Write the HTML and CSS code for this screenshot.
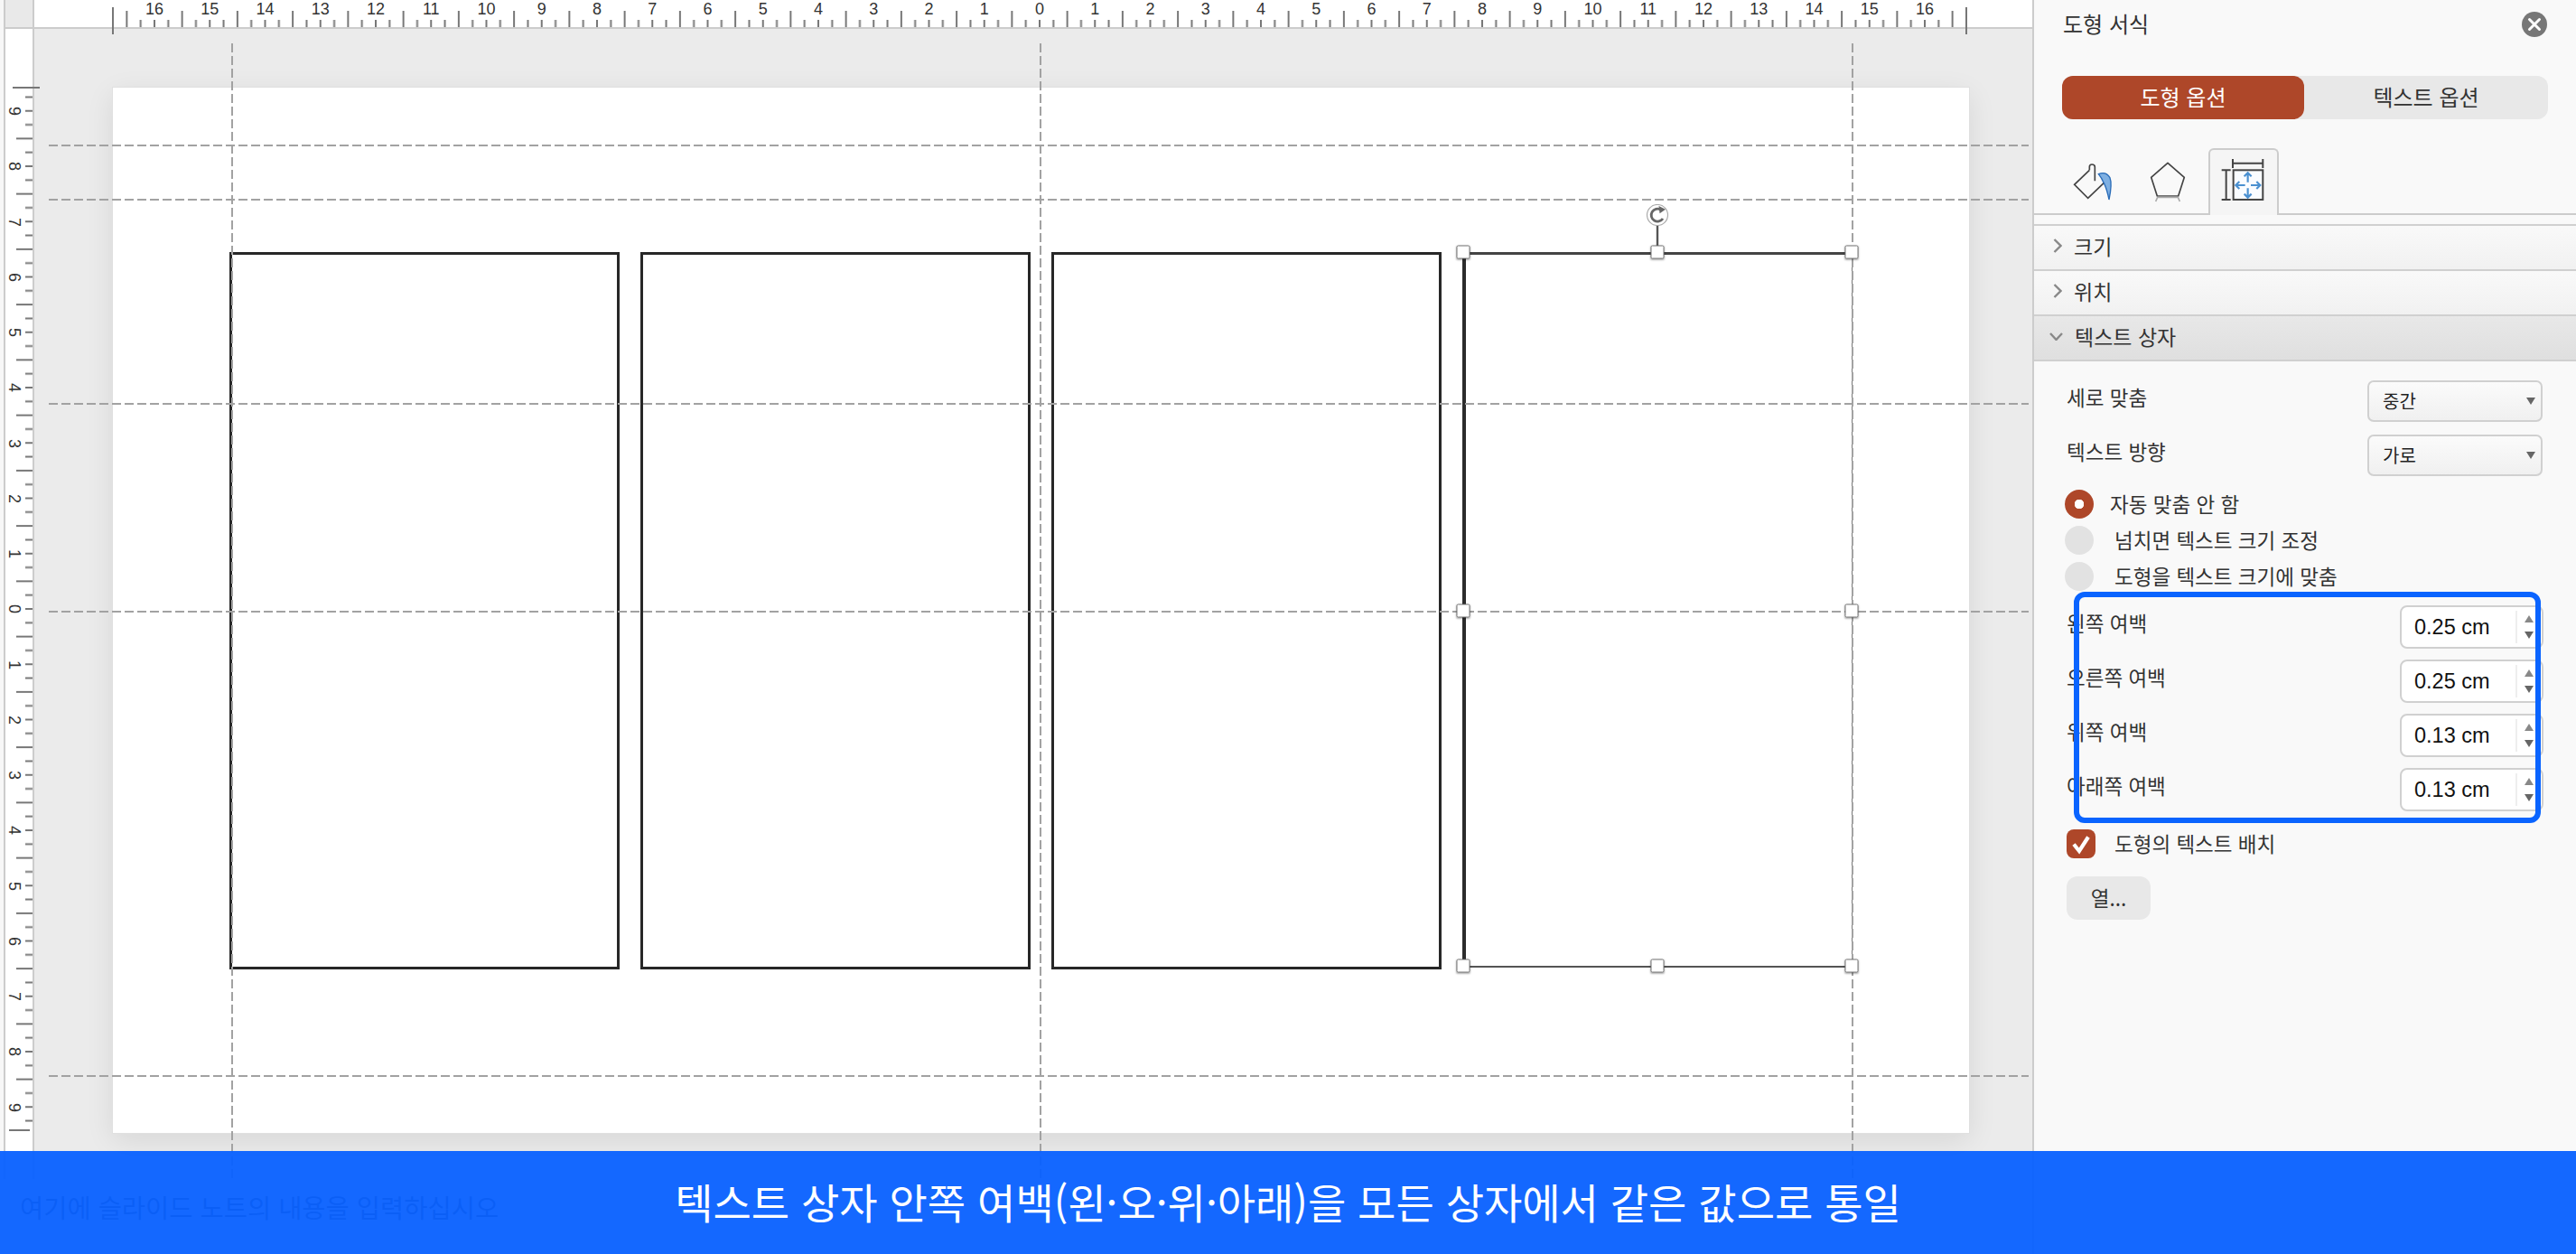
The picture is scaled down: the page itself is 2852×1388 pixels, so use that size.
FILE: index.html
```html
<!DOCTYPE html>
<html lang="ko">
<head>
<meta charset="utf-8">
<title>도형 서식</title>
<link rel="stylesheet" href="styles.css">
</head>
<body>
<div class="app">
  <main class="workspace">
    <div class="corner"></div>
    <div class="hruler">
      <span>16</span><span>15</span><span>14</span><span>13</span><span>12</span><span>11</span><span>10</span><span>9</span><span>8</span><span>7</span><span>6</span><span>5</span><span>4</span><span>3</span><span>2</span><span>1</span><span>0</span><span>1</span><span>2</span><span>3</span><span>4</span><span>5</span><span>6</span><span>7</span><span>8</span><span>9</span><span>10</span><span>11</span><span>12</span><span>13</span><span>14</span><span>15</span><span>16</span>
    </div>
    <div class="vruler">
      <span>9</span><span>8</span><span>7</span><span>6</span><span>5</span><span>4</span><span>3</span><span>2</span><span>1</span><span>0</span><span>1</span><span>2</span><span>3</span><span>4</span><span>5</span><span>6</span><span>7</span><span>8</span><span>9</span>
    </div>
    <div class="canvas">
      <div class="slide">
        <div class="box"></div>
        <div class="box"></div>
        <div class="box"></div>
        <div class="box box-selected">
          <svg class="rotate" viewBox="-13 -12 26 47" width="26" height="47">
            <line x1="0" y1="11" x2="0" y2="34" stroke="#555" stroke-width="2.4"/>
            <circle cx="0" cy="0" r="11.5" fill="#fff" stroke="#aaa" stroke-width="1.2"/>
            <path d="M6 4A7 7 0 1 1 3.6-6" fill="none" stroke="#666" stroke-width="2.8"/>
            <path d="M1.5-10 9-6.2 2.5-1.8Z" fill="#666"/>
          </svg>
          <i class="handle h-tl"></i><i class="handle h-tc"></i><i class="handle h-tr"></i>
          <i class="handle h-ml"></i><i class="handle h-mr"></i>
          <i class="handle h-bl"></i><i class="handle h-bc"></i><i class="handle h-br"></i>
        </div>
      </div>
      <i class="guide-v gv1"></i><i class="guide-v gv2"></i><i class="guide-v gv3"></i>
      <i class="guide-h gh1"></i><i class="guide-h gh2"></i><i class="guide-h gh3"></i><i class="guide-h gh4"></i><i class="guide-h gh5"></i>
    </div>
    <div class="notes">여기에 슬라이드 노트의 내용을 입력하십시오</div>
    <svg class="ticks-h" width="2250" height="40" aria-hidden="true">
      <defs>
        <pattern id="tick-h" patternUnits="userSpaceOnUse" x="1150" y="0" width="61.25" height="40">
          <rect x="0" y="22" width="2" height="8" fill="#777"/>
          <rect x="15.31" y="22" width="2" height="8" fill="#777"/>
          <rect x="30.62" y="12" width="2" height="18" fill="#777"/>
          <rect x="45.94" y="22" width="2" height="8" fill="#777"/>
        </pattern>
      </defs>
      <rect x="130" y="0" width="2040" height="31" fill="url(#tick-h)"/>
      <rect x="124" y="8" width="2" height="30" fill="#777"/>
      <rect x="2176" y="8" width="2" height="30" fill="#777"/>
    </svg>
    <svg class="ticks-v" width="48" height="1300" aria-hidden="true">
      <defs>
        <pattern id="tick-v" patternUnits="userSpaceOnUse" x="0" y="673" width="40" height="61.25">
          <rect x="28" y="0" width="8" height="2" fill="#777"/>
          <rect x="28" y="15.31" width="8" height="2" fill="#777"/>
          <rect x="18" y="30.62" width="18" height="2" fill="#777"/>
          <rect x="28" y="45.94" width="8" height="2" fill="#777"/>
        </pattern>
      </defs>
      <rect x="0" y="102" width="36" height="1144" fill="url(#tick-v)"/>
      <rect x="14" y="96" width="30" height="2" fill="#777"/>
      <rect x="10" y="1250" width="23" height="2" fill="#777"/>
    </svg>
  </main>

  <aside class="panel">
    <header class="panel-head">
      <h1>도형 서식</h1>
      <button class="close" type="button" aria-label="닫기">
        <svg viewBox="0 0 28 28" width="28" height="28"><path d="M8.5 8.5 19.5 19.5M19.5 8.5 8.5 19.5" stroke="#fff" stroke-width="3" stroke-linecap="round"/></svg>
      </button>
    </header>
    <div class="segment">
      <div class="seg seg-on">도형 옵션</div>
      <div class="seg">텍스트 옵션</div>
    </div>
    <div class="icon-tabs">
      <svg class="ico-fill" viewBox="45 125 135 125" width="45" height="41.67">
        <path d="M100 147 50 195 95 240 160 178" fill="none" stroke="#444" stroke-width="5" stroke-linejoin="miter"/>
        <path d="M100 147V136Q100 128 108 128 118 128 118 136V183" fill="none" stroke="#444" stroke-width="5"/>
        <path d="M130 160Q155 150 168 172 176 192 165 245 158 210 148 190 140 172 130 160Z" fill="#7fb0e2" stroke="#2a6cb8" stroke-width="4"/>
      </svg>
      <svg class="ico-shape" viewBox="300 118 120 135" width="40" height="45">
        <path d="M360 122 415 170 395 232H325L305 170Z" fill="none" stroke="#444" stroke-width="5" stroke-linejoin="round"/>
        <path d="M325 236H395M326 236 320 250M394 236 400 250" fill="none" stroke="#aaa" stroke-width="5"/>
      </svg>
      <div class="tab-on">
        <svg viewBox="535 112 148 142" width="49.3" height="47.3">
          <rect x="579" y="152" width="98" height="98" fill="#f9fcff" stroke="#444" stroke-width="6"/>
          <path d="M577 115V145M677 115V145M577 129H677M540 152H570M540 250H570M555 152V250" fill="none" stroke="#444" stroke-width="6"/>
          <path d="M627 162V192M615 173 627 161 639 173M627 212V242M615 231 627 243 639 231M588 202H618M599 190 587 202 599 214M637 202H667M656 190 668 202 656 214" fill="none" stroke="#4a90d0" stroke-width="6.5"/>
        </svg>
      </div>
    </div>
    <div class="section-head first">
      <svg class="chev-r" viewBox="0 0 10 16" width="10" height="16"><path d="M1.5 1 8.5 8 1.5 15" fill="none" stroke="#888" stroke-width="2.4"/></svg>
      <span>크기</span>
    </div>
    <div class="section-head">
      <svg class="chev-r" viewBox="0 0 10 16" width="10" height="16"><path d="M1.5 1 8.5 8 1.5 15" fill="none" stroke="#888" stroke-width="2.4"/></svg>
      <span>위치</span>
    </div>
    <div class="section-head open">
      <svg class="chev-d" viewBox="0 0 15 9" width="15" height="9"><path d="M1 1 7.5 8 14 1" fill="none" stroke="#888" stroke-width="2.4"/></svg>
      <span>텍스트 상자</span>
    </div>
    <div class="form">
      <div class="row">
        <label>세로 맞춤</label>
        <div class="select">중간<i class="tri-down"></i></div>
      </div>
      <div class="row row-b">
        <label>텍스트 방향</label>
        <div class="select">가로<i class="tri-down"></i></div>
      </div>
      <div class="radios">
        <div class="radio-row first"><i class="radio on"></i><span>자동 맞춤 안 함</span></div>
        <div class="radio-row"><i class="radio"></i><span>넘치면 텍스트 크기 조정</span></div>
        <div class="radio-row"><i class="radio"></i><span>도형을 텍스트 크기에 맞춤</span></div>
      </div>
      <div class="margins">
        <div class="row"><label>왼쪽 여백</label><div class="num">0.25 cm<div class="spin"><i class="tri-up"></i><i class="tri-down"></i></div></div></div>
        <div class="row"><label>오른쪽 여백</label><div class="num">0.25 cm<div class="spin"><i class="tri-up"></i><i class="tri-down"></i></div></div></div>
        <div class="row"><label>위쪽 여백</label><div class="num">0.13 cm<div class="spin"><i class="tri-up"></i><i class="tri-down"></i></div></div></div>
        <div class="row"><label>아래쪽 여백</label><div class="num">0.13 cm<div class="spin"><i class="tri-up"></i><i class="tri-down"></i></div></div></div>
      </div>
      <div class="check-row">
        <i class="check"><svg viewBox="0 0 32 32" width="32" height="32"><path d="M8 16.5 14 24 24 8.5" fill="none" stroke="#fff" stroke-width="4.2"/></svg></i>
        <span>도형의 텍스트 배치</span>
      </div>
      <button class="columns" type="button">열...</button>
    </div>
    <div class="highlight"></div>
  </aside>

  <div class="caption">텍스트 상자 안쪽 여백(왼·오·위·아래)을 모든 상자에서 같은 값으로 통일</div>
</div>
</body>
</html>
```

FILE: styles.css
```css
* { box-sizing: border-box; }
html, body { margin: 0; padding: 0; }
body {
  font-family: "Noto Sans CJK KR", "Liberation Sans", sans-serif;
  color: #333;
  background: #fff;
}
i { display: block; font-style: normal; }

.app {
  position: relative;
  display: flex;
  width: 2852px;
  height: 1388px;
  overflow: hidden;
}

/* Workspace */
.workspace {
  position: relative;
  width: 2250px;
  height: 1388px;
  display: grid;
  grid-template-columns: 38px 1fr;
  grid-template-rows: 32px 1273px 83px;
  background: #f7f7f7;
}
.corner {
  margin-left: 4px;
  background: #e9e9e9;
  border-left: 2px solid #ccc;
  border-right: 2px solid #ccc;
  border-bottom: 2px solid #ccc;
}
.hruler {
  display: flex;
  padding-left: 102.4px;
  background: #fff;
  border-bottom: 2px solid #ccc;
  font-family: "Liberation Sans", sans-serif;
  font-size: 18px;
  line-height: 20px;
  color: #333;
}
.hruler span {
  flex: 0 0 61.25px;
  text-align: center;
}
.vruler {
  display: flex;
  flex-direction: column;
  margin-left: 4px;
  padding-top: 60.4px;
  background: #fff;
  border-left: 2px solid #ccc;
  border-right: 2px solid #ccc;
  font-family: "Liberation Sans", sans-serif;
  font-size: 18px;
  color: #333;
}
.vruler span {
  flex: 0 0 61.25px;
  width: 20px;
  line-height: 20px;
  margin-left: 0;
  writing-mode: vertical-rl;
  text-align: center;
}
.ticks-h, .ticks-v {
  position: absolute;
  left: 0;
  top: 0;
  pointer-events: none;
}

.canvas {
  position: relative;
  overflow: hidden;
  background: #ebebeb;
}
.slide {
  display: flex;
  align-items: flex-start;
  gap: 23px;
  width: 2055px;
  height: 1157px;
  margin: 65px 0 0 87px;
  padding: 182px 0 0 129px;
  background: #fff;
  box-shadow: 0 0 0 1px #e0e0e0, 0 8px 30px rgba(0, 0, 0, .09);
}
.box {
  position: relative;
  width: 432px;
  height: 794px;
  border: 3px solid #272727;
}
.box-selected {
  height: 792px;
  border-top: 3px solid #444;
  border-bottom: 2px solid #555;
  border-left: 4px solid #2c2c2c;
  border-right: 1px solid #777;
}
.rotate {
  position: absolute;
  left: calc(50% - 2px);
  top: -56px;
  transform: translateX(-50%);
}
.handle {
  position: absolute;
  width: 15px;
  height: 15px;
  background: #fff;
  border: 1px solid #777;
  border-radius: 2px;
  box-shadow: 0 1px 2px rgba(0, 0, 0, .3);
  transform: translate(-50%, -50%);
  z-index: 1;
}
.h-tl { left: -3px; top: -3px; }
.h-tc { left: calc(50% - 2px); top: -3px; }
.h-tr { left: 100%; top: -3px; }
.h-ml { left: -3px; top: 50%; }
.h-mr { left: 100%; top: 50%; }
.h-bl { left: -3px; top: 100%; }
.h-bc { left: calc(50% - 2px); top: 100%; }
.h-br { left: 100%; top: 100%; }

.guide-v, .guide-h { position: absolute; }
.guide-v {
  top: 16px;
  bottom: 0;
  width: 2px;
  background: repeating-linear-gradient(180deg, #a2a2a2 0 10px, transparent 10px 14px);
}
.guide-h {
  left: 16px;
  right: 4px;
  height: 2px;
  background: repeating-linear-gradient(90deg, #a2a2a2 0 10px, transparent 10px 14px);
}
.gv1 { left: 218px; }
.gv2 { left: 1113px; }
.gv3 { left: 2012px; }
.gh1 { top: 128px; }
.gh2 { top: 188px; }
.gh3 { top: 414px; }
.gh4 { top: 644px; }
.gh5 { top: 1158px; }

.notes {
  grid-column: 1 / 3;
  padding: 11px 0 0 22px;
  background: #fff;
  font-size: 28.5px;
  line-height: 40px;
  color: #222;
}

/* Panel */
.panel {
  position: relative;
  flex: 0 0 602px;
  height: 1388px;
  background: #f9f9f9;
  border-left: 2px solid #ccc;
}
.panel-head {
  display: flex;
  align-items: center;
  justify-content: space-between;
  height: 54px;
  padding: 0 32px 0 32px;
}
.panel-head h1 {
  margin: 0 0 3px;
  font-size: 24px;
  font-weight: 400;
  color: #333;
}
.close {
  width: 28px;
  height: 28px;
  padding: 0;
  border: 0;
  border-radius: 50%;
  background: #777;
}
.close svg { display: block; }

.segment {
  display: flex;
  width: 538px;
  height: 48px;
  margin: 30px 0 0 31px;
  background: #e8e8e8;
  border-radius: 12px;
  font-size: 24px;
}
.seg {
  display: flex;
  flex: 1;
  align-items: center;
  justify-content: center;
  padding-bottom: 3px;
  color: #333;
}
.seg-on {
  flex: 0 0 268px;
  background: #ae4729;
  border-radius: 12px;
  color: #fff;
}

.icon-tabs {
  position: relative;
  display: flex;
  align-items: flex-end;
  height: 74px;
  margin-top: 32px;
  border-bottom: 2px solid #ccc;
}
.ico-fill { margin: 0 0 13px 43px; }
.ico-shape { margin: 0 0 12px 40px; }
.tab-on {
  width: 78px;
  height: 74px;
  margin: 0 0 -2px 25px;
  padding: 9px 0 0 11px;
  background: #f5f5f5;
  border: 2px solid #ccc;
  border-bottom: 0;
  border-radius: 6px 6px 0 0;
}
.tab-on svg { display: block; }

.section-head {
  display: flex;
  align-items: center;
  gap: 13px;
  height: 50px;
  padding: 0 0 4px 21px;
  background: linear-gradient(#f9f9f9, #f1f1f1);
  border-bottom: 2px solid #d0d0d0;
  font-size: 23px;
  color: #333;
}
.section-head.first {
  height: 52px;
  margin-top: 10px;
  border-top: 2px solid #d0d0d0;
}
.section-head.open {
  padding-left: 17px;
  background: linear-gradient(#e8e8e8, #dfdfdf);
}
.section-head svg { flex: none; }

.form {
  display: flex;
  flex-direction: column;
  align-items: flex-start;
  padding: 21px 37px 0 36px;
  font-size: 22.5px;
  color: #333;
}
.row {
  display: flex;
  align-items: center;
  justify-content: space-between;
  width: 100%;
}
.row-b { margin-top: 14px; }
.row label { margin-bottom: 10px; }
.select {
  position: relative;
  width: 194px;
  height: 46px;
  padding-left: 15px;
  background: linear-gradient(#fbfbfb, #f0f0f0);
  border: 2px solid #d0d0d0;
  border-radius: 7px;
  font-size: 20px;
  line-height: 42px;
  color: #222;
}
.tri-down, .tri-up {
  width: 0;
  height: 0;
  border-left: 5px solid transparent;
  border-right: 5px solid transparent;
}
.tri-down { border-top: 8px solid #666; }
.tri-up { border-bottom: 8px solid #888; }
.select .tri-down {
  position: absolute;
  right: 6px;
  top: 17px;
}

.radios { margin: 15px 0 0 -2px; }
.radio-row {
  display: flex;
  align-items: center;
  gap: 23px;
  height: 32px;
  margin-top: 8px;
}
.radio-row span { margin-bottom: 2px; }
.radio-row.first { gap: 18px; margin-top: 0; }
.radio {
  width: 32px;
  height: 32px;
  background: #e2e2e2;
  border-radius: 50%;
}
.radio.on {
  background: radial-gradient(circle, #fff 0 5px, #ae4729 5.5px);
}

.margins {
  display: flex;
  flex-direction: column;
  gap: 12px;
  width: 100%;
  margin-top: 16px;
}
.num {
  position: relative;
  width: 159px;
  height: 48px;
  margin-right: -1px;
  padding-left: 14px;
  background: #fff;
  border: 2px solid #d0d0d0;
  border-radius: 8px;
  font-family: "Liberation Sans", sans-serif;
  font-size: 23.5px;
  line-height: 44px;
  color: #111;
}
.spin {
  position: absolute;
  right: 2px;
  top: 4px;
  bottom: 4px;
  display: flex;
  flex-direction: column;
  align-items: center;
  justify-content: space-between;
  width: 27px;
  padding: 5px 0;
  border-left: 2px solid #eee;
}

.check-row {
  display: flex;
  align-items: center;
  gap: 21px;
  height: 32px;
  margin: 20px 0 0 0;
}
.check-row span { margin-bottom: 2px; }
.check {
  width: 32px;
  height: 32px;
  background: #ae4729;
  border-radius: 8px;
}
.check svg { display: block; }

.columns {
  width: 93px;
  height: 48px;
  margin: 20px 0 0 0;
  padding: 0 0 3px;
  background: #e8e8e8;
  border: 0;
  border-radius: 12px;
  font: inherit;
  color: #333;
}

.highlight {
  position: absolute;
  left: 44px;
  top: 655px;
  width: 517px;
  height: 256px;
  border: 6px solid #0a64ff;
  border-radius: 12px;
  pointer-events: none;
}

.caption {
  position: absolute;
  left: 0;
  right: 0;
  top: 1274px;
  height: 114px;
  display: flex;
  align-items: center;
  justify-content: center;
  padding-bottom: 5px;
  background: rgba(10, 98, 255, .96);
  font-size: 46px;
  color: #fff;
}
```
